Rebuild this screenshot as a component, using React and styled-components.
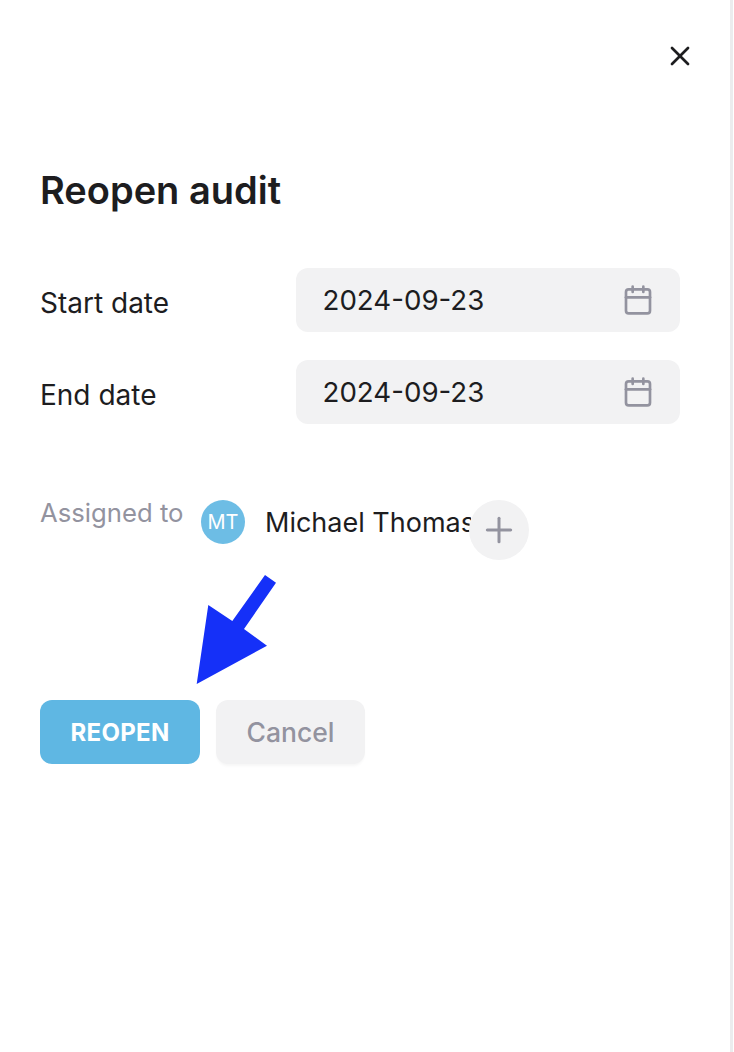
import React from "react";
import styled, { createGlobalStyle } from "styled-components";
import { Calendar, Plus, X } from "lucide-react";

const GlobalStyle = createGlobalStyle`
  html, body {
    margin: 0;
    padding: 0;
    background: #fff;
    overflow: hidden;
  }
  * {
    box-sizing: border-box;
  }
`;

const DateField = ({ label, value }) => (
  <FieldRow>
    <FieldLabel>{label}</FieldLabel>
    <DateInput>
      <span>{value}</span>
      <Calendar size={32} strokeWidth={2} color="#93939f" />
    </DateInput>
  </FieldRow>
);

const App = () => {
  return (
    <Panel>
      <GlobalStyle />
      <TopBar>
        <CloseButton>
          <X size={32} strokeWidth={2} color="#1d1d1f" />
        </CloseButton>
      </TopBar>
      <Title>Reopen audit</Title>
      <Fields>
        <DateField label="Start date" value="2024-09-23" />
        <DateField label="End date" value="2024-09-23" />
      </Fields>
      <AssignedRow>
        <AssignedLabel>Assigned to</AssignedLabel>
        <Avatar>MT</Avatar>
        <UserName>Michael Thomas</UserName>
        <AddButton>
          <Plus size={40} strokeWidth={1.8} color="#93939f" />
        </AddButton>
      </AssignedRow>
      <Actions>
        <PrimaryButton>REOPEN</PrimaryButton>
        <SecondaryButton>Cancel</SecondaryButton>
        <Arrow viewBox="0 0 90 120" width="90" height="120">
          <polygon
            points="75,2 86,9.7 54,56 77,72.7 6.7,111 18.3,32 42.3,48"
            fill="#1530f8"
          />
        </Arrow>
      </Actions>
    </Panel>
  );
};

export default App;

const Panel = styled.div`
  width: 733px;
  height: 1052px;
  padding: 40px 50px 0 40px;
  background: #fff;
  border-right: 3px solid #ececee;
  font-family: Inter, "Liberation Sans", sans-serif;
  color: #1d1d1f;
`;

const TopBar = styled.div`
  display: flex;
  justify-content: flex-end;
  height: 32px;
`;

const CloseButton = styled.div`
  display: flex;
  margin-right: -16px;
`;

const Title = styled.h1`
  margin: 93px 0 0;
  font-size: 38px;
  line-height: 50px;
  font-weight: 600;
  color: #1d1d1f;
`;

const Fields = styled.div`
  display: flex;
  flex-direction: column;
  gap: 28px;
  margin-top: 53px;
`;

const FieldRow = styled.div`
  display: flex;
  align-items: center;
`;

const FieldLabel = styled.div`
  flex: none;
  width: 256px;
  padding-top: 5px;
  font-size: 28px;
  line-height: 32px;
`;

const DateInput = styled.div`
  display: flex;
  flex: none;
  align-items: center;
  justify-content: space-between;
  width: 384px;
  height: 64px;
  padding: 0 26px 0 26.5px;
  border-radius: 12px;
  background: #f2f2f3;
  font-size: 27.7px;
  line-height: 36px;
`;

const AssignedRow = styled.div`
  display: flex;
  align-items: flex-start;
  margin-top: 76px;
  height: 60px;
`;

const AssignedLabel = styled.div`
  flex: none;
  width: 161px;
  margin-top: -1px;
  font-size: 25.7px;
  line-height: 28px;
  color: #93939f;
  white-space: nowrap;
`;

const Avatar = styled.div`
  display: flex;
  align-items: center;
  justify-content: center;
  flex: none;
  width: 44px;
  height: 44px;
  border-radius: 50%;
  background: #6dbde5;
  color: #fff;
  font-size: 20px;
  font-weight: 400;
`;

const UserName = styled.div`
  flex: none;
  width: 206px;
  margin-left: 20px;
  overflow: hidden;
  font-size: 27px;
  line-height: 46px;
  white-space: nowrap;
`;

const AddButton = styled.div`
  display: flex;
  align-items: center;
  justify-content: center;
  flex: none;
  width: 60px;
  height: 60px;
  margin-left: -2px;
  border-radius: 50%;
  background: #f2f2f3;
`;

const Actions = styled.div`
  position: relative;
  display: flex;
  gap: 16px;
  margin-top: 140px;
`;

const Arrow = styled.svg`
  position: absolute;
  left: 150px;
  top: -127px;
`;

const BaseButton = styled.div`
  display: flex;
  align-items: center;
  justify-content: center;
  height: 64px;
  border-radius: 12px;
`;

const PrimaryButton = styled(BaseButton)`
  width: 160px;
  background: #5fb7e3;
  color: #fff;
  font-size: 24px;
  font-weight: 700;
  letter-spacing: 0.3px;
`;

const SecondaryButton = styled(BaseButton)`
  width: 149px;
  background: #f2f2f3;
  color: #93939f;
  font-size: 26.5px;
  font-weight: 500;
  box-shadow: 0 3px 3px -1px rgba(0, 0, 0, 0.04);
`;
